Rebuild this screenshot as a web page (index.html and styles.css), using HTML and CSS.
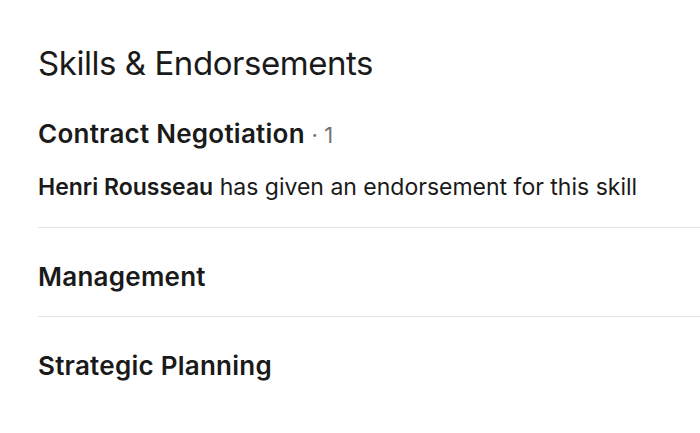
FILE: index.html
```html
<!DOCTYPE html>
<html>
<head>
<meta charset="utf-8">
<link rel="stylesheet" href="styles.css">
</head>
<body>
<section class="card">
  <h2 class="title">Skills &amp; Endorsements</h2>
  <ul class="skills">
    <li class="skill">
      <div class="skill-name">Contract Negotiation <span class="count">· 1</span></div>
      <p class="endorse"><strong>Henri Rousseau</strong> has given an endorsement for this skill</p>
    </li>
    <li class="skill">
      <div class="skill-name">Management</div>
    </li>
    <li class="skill">
      <div class="skill-name">Strategic Planning</div>
    </li>
  </ul>
</section>
</body>
</html>
```
FILE: styles.css
```css
html, body {
  margin: 0;
  padding: 0;
  background: #fff;
}
body {
  font-family: Inter, "Noto Sans", sans-serif;
  color: #1a1a1a;
}
.card {
  padding: 43px 0 0 38px;
}
.title {
  margin: 0;
  font-size: 33px;
  font-weight: 400;
  line-height: 40px;
  letter-spacing: -0.45px;
}
.skills {
  list-style: none;
  margin: 0;
  padding: 0;
}
.skill {
  border-bottom: 1px solid #e2e2e2;
  padding: 33px 0 23px;
}
.skill:first-child {
  padding-top: 35px;
  padding-bottom: 25px;
}
.skill:last-child {
  border-bottom: none;
}
.skill-name {
  font-size: 26px;
  font-weight: 600;
  line-height: 32px;
  letter-spacing: 0.25px;
}
.count {
  font-weight: 400;
  font-size: 22px;
  letter-spacing: 0;
  color: #737373;
}
.endorse {
  margin: 21px 0 0;
  font-size: 23px;
  line-height: 30px;
}
.endorse strong {
  font-weight: 600;
}
```
